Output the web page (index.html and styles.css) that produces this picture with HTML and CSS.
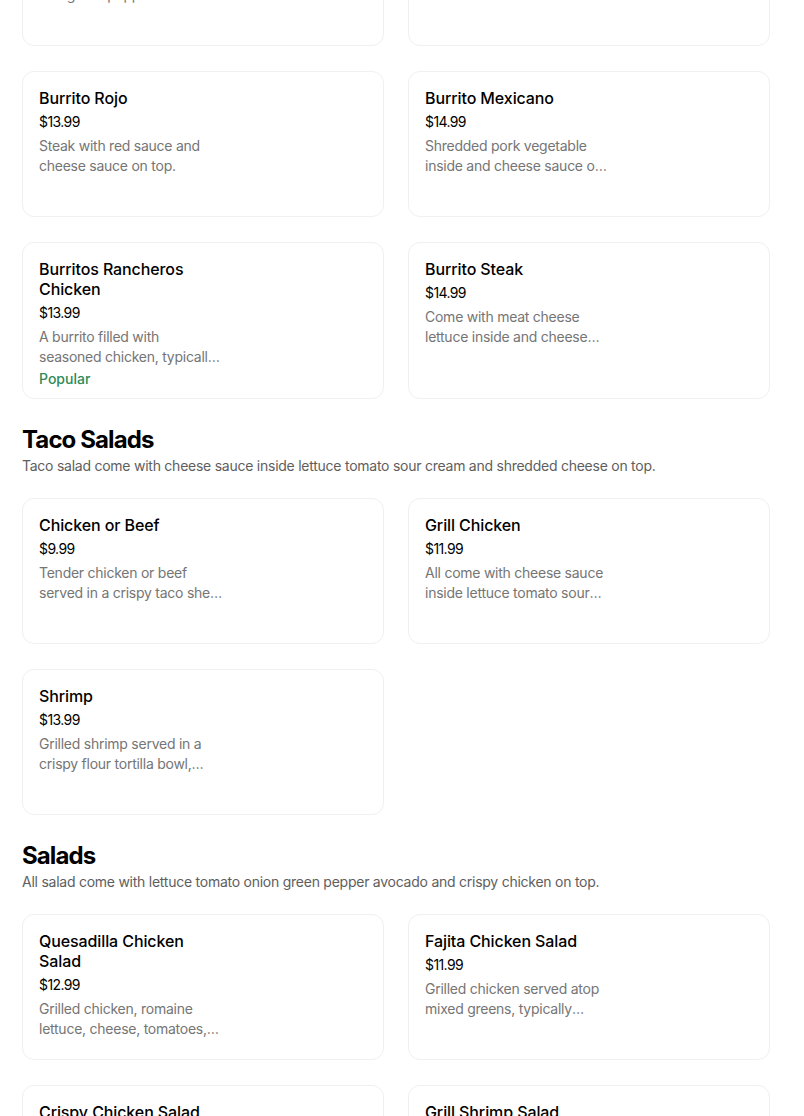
FILE: index.html
```html
<!DOCTYPE html>
<html lang="en">
<head>
<meta charset="utf-8">
<title>Menu</title>
<link rel="stylesheet" href="styles.css">
</head>
<body>
<main class="menu">
  <section class="section section-first">
    <div class="grid">
      <article class="card">
        <div class="info">
          <h3 class="title">Burrito Fajita</h3>
          <div class="price">$14.99</div>
          <p class="desc">Steak or chicken with onions and green pepper and cheese sauce.</p>
        </div>
      </article>
      <article class="card">
        <div class="info">
          <h3 class="title">Burrito Loco</h3>
          <div class="price">$13.99</div>
          <p class="desc">Steak with cheese sauce.</p>
        </div>
      </article>
      <article class="card">
        <div class="info">
          <h3 class="title">Burrito Rojo</h3>
          <div class="price">$13.99</div>
          <p class="desc">Steak with red sauce and cheese sauce on top.</p>
        </div>
      </article>
      <article class="card">
        <div class="info">
          <h3 class="title">Burrito Mexicano</h3>
          <div class="price">$14.99</div>
          <p class="desc">Shredded pork vegetable inside and cheese sauce on top.</p>
        </div>
      </article>
      <article class="card">
        <div class="info">
          <h3 class="title">Burritos Rancheros Chicken</h3>
          <div class="price">$13.99</div>
          <p class="desc">A burrito filled with seasoned chicken, typically topped with ranchero sauce.</p>
          <div class="badge">Popular</div>
        </div>
      </article>
      <article class="card">
        <div class="info">
          <h3 class="title">Burrito Steak</h3>
          <div class="price">$14.99</div>
          <p class="desc">Come with meat cheese lettuce inside and cheese sauce on top.</p>
        </div>
      </article>
    </div>
  </section>

  <section class="section">
    <h2 class="section-title">Taco Salads</h2>
    <p class="section-desc">Taco salad come with cheese sauce inside lettuce tomato sour cream and shredded cheese on top.</p>
    <div class="grid">
      <article class="card">
        <div class="info">
          <h3 class="title">Chicken or Beef</h3>
          <div class="price">$9.99</div>
          <p class="desc">Tender chicken or beef served in a crispy taco shell bowl with lettuce.</p>
        </div>
      </article>
      <article class="card">
        <div class="info">
          <h3 class="title">Grill Chicken</h3>
          <div class="price">$11.99</div>
          <p class="desc">All come with cheese sauce inside lettuce tomato sour cream.</p>
        </div>
      </article>
      <article class="card">
        <div class="info">
          <h3 class="title">Shrimp</h3>
          <div class="price">$13.99</div>
          <p class="desc">Grilled shrimp served in a crispy flour tortilla bowl, accompanied by lettuce.</p>
        </div>
      </article>
    </div>
  </section>

  <section class="section">
    <h2 class="section-title">Salads</h2>
    <p class="section-desc">All salad come with lettuce tomato onion green pepper avocado and crispy chicken on top.</p>
    <div class="grid">
      <article class="card">
        <div class="info">
          <h3 class="title">Quesadilla Chicken Salad</h3>
          <div class="price">$12.99</div>
          <p class="desc">Grilled chicken, romaine lettuce, cheese, tomatoes, and onions.</p>
        </div>
      </article>
      <article class="card">
        <div class="info">
          <h3 class="title">Fajita Chicken Salad</h3>
          <div class="price">$11.99</div>
          <p class="desc">Grilled chicken served atop mixed greens, typically accompanied by peppers.</p>
        </div>
      </article>
      <article class="card">
        <div class="info">
          <h3 class="title">Crispy Chicken Salad</h3>
          <div class="price">$11.99</div>
          <p class="desc">Crispy chicken over lettuce, tomato and onion.</p>
        </div>
      </article>
      <article class="card">
        <div class="info">
          <h3 class="title">Grill Shrimp Salad</h3>
          <div class="price">$13.99</div>
          <p class="desc">Grilled shrimp over lettuce, tomato and avocado.</p>
        </div>
      </article>
    </div>
  </section>
</main>
</body>
</html>
```

FILE: styles.css
```css
* {
  box-sizing: border-box;
}

html, body {
  margin: 0;
  padding: 0;
  background: #ffffff;
}

body {
  font-family: Inter, "Noto Sans", "Liberation Sans", sans-serif;
  color: #000000;
  overflow: hidden;
}

.menu {
  width: 748px;
  margin-left: 22px;
  margin-top: -100px;
}

.section {
  padding-top: 25px;
}

.section-first {
  padding-top: 0;
}

.section-title {
  margin: 0;
  font-size: 24px;
  line-height: 32px;
  font-weight: 700;
  letter-spacing: -0.9px;
  color: #000000;
}

.section-desc {
  margin: 0;
  font-size: 14px;
  line-height: 20px;
  letter-spacing: -0.25px;
  color: #5e5e5e;
}

.section-desc + .grid {
  margin-top: 22px;
}

.grid {
  display: grid;
  grid-template-columns: 1fr 1fr;
  column-gap: 24px;
  row-gap: 25px;
  align-items: stretch;
}

.card {
  min-height: 146px;
  border: 1px solid #f0f0f0;
  border-radius: 12px;
  padding: 16px 16px 11px;
  background: #ffffff;
}

.info {
  width: 185px;
}

.title {
  margin: 0;
  font-size: 16px;
  line-height: 20px;
  font-weight: 500;
  letter-spacing: -0.1px;
  color: #000000;
}

.price {
  margin-top: 4px;
  font-size: 14px;
  line-height: 20px;
  letter-spacing: -0.6px;
  color: #000000;
}

.desc {
  margin: 4px 0 0;
  font-size: 14px;
  line-height: 20px;
  letter-spacing: -0.25px;
  color: #757575;
  display: -webkit-box;
  -webkit-line-clamp: 2;
  -webkit-box-orient: vertical;
  overflow: hidden;
}

.badge {
  margin-top: 4px;
  font-size: 14px;
  line-height: 16px;
  font-weight: 500;
  color: #2f8a58;
}
```
